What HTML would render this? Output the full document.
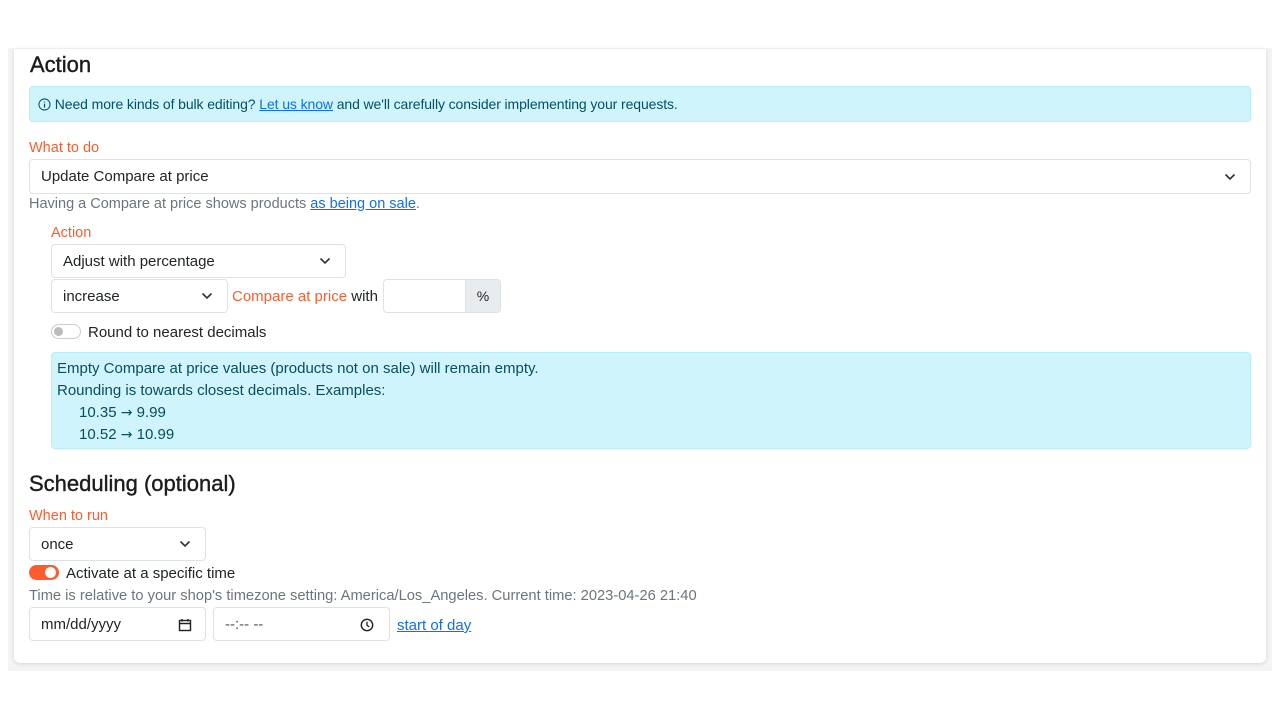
<!DOCTYPE html>
<html><head><style>
*{box-sizing:border-box;margin:0;padding:0}
body{width:1280px;height:720px;background:#fff;font-family:"Liberation Sans",sans-serif;position:relative;overflow:hidden;color:#212529}
.bg{position:absolute;left:8px;top:48px;width:1264px;height:623px;background:#f4f4f5}
.card{position:absolute;left:14px;top:49px;width:1252px;height:614px;background:#fff;border-radius:0 0 6px 6px;box-shadow:0 1px 4px rgba(0,0,0,.12)}
.a{position:absolute}
h2{position:absolute;font-weight:400;font-size:22px;color:#1d1d1d;-webkit-text-stroke:0.4px #1d1d1d}
.lbl{position:absolute;color:#fd5d2c;font-size:14.5px}
.info{position:absolute;background:#cff4fc;border:1px solid #b6effb;border-radius:4px;color:#055160;font-size:14.5px}
.sel{position:absolute;border:1px solid #dee2e6;border-radius:4px;background:#fff;font-size:15px;padding-left:11px;display:flex;align-items:center}
.chev{position:absolute;right:14px;top:50%;margin-top:-4px}
a{color:#0d6efd;text-decoration:underline}
.muted{position:absolute;color:#6c757d;font-size:14.5px}
.t{position:absolute;font-size:15px}
.ar{font-family:"DejaVu Sans",sans-serif;font-size:14px}
</style></head><body>
<div class="bg"></div>
<div class="card"></div>
<h2 style="left:30px;top:52px">Action</h2>
<div class="info" style="left:29px;top:86px;width:1222px;height:36px;padding:9px 0 0 8px;font-size:14px;letter-spacing:-0.1px"><svg width="13" height="13" viewBox="0 0 14 14" style="vertical-align:-2px"><circle cx="7" cy="7" r="6" fill="none" stroke="#055160" stroke-width="1.1"/><path d="M7 6v4.2M7 3.8v.9" stroke="#055160" stroke-width="1.3"/></svg> Need more kinds of bulk editing? <a>Let us know</a> and we'll carefully consider implementing your requests.</div>
<div class="lbl" style="left:29px;top:140px">What to do</div>
<div class="sel" style="left:29px;top:159px;width:1222px;height:35px">Update Compare at price<svg class="chev" width="12" height="8" viewBox="0 0 12 8"><path d="M1.5 1.5l4.5 4.5 4.5-4.5" fill="none" stroke="#333" stroke-width="1.6"/></svg></div>
<div class="muted" style="left:29px;top:196px">Having a Compare at price shows products <a>as being on sale</a>.</div>
<div class="lbl" style="left:51px;top:225px">Action</div>
<div class="sel" style="left:51px;top:244px;width:295px;height:34px">Adjust with percentage<svg class="chev" width="12" height="8" viewBox="0 0 12 8"><path d="M1.5 1.5l4.5 4.5 4.5-4.5" fill="none" stroke="#333" stroke-width="1.6"/></svg></div>
<div class="sel" style="left:51px;top:279px;width:177px;height:34px">increase<svg class="chev" width="12" height="8" viewBox="0 0 12 8"><path d="M1.5 1.5l4.5 4.5 4.5-4.5" fill="none" stroke="#333" stroke-width="1.6"/></svg></div>
<div class="t" style="left:232px;top:288px"><span style="color:#fd5d2c">Compare at price</span> with</div>
<div class="a" style="left:383px;top:279px;width:118px;height:34px;border:1px solid #dee2e6;border-radius:4px;overflow:hidden"><div style="position:absolute;right:0;top:0;width:35px;height:100%;background:#e9ecef;border-left:1px solid #dee2e6;text-align:center;line-height:32px;font-size:14px">%</div></div>
<div class="a" style="left:51px;top:324px;width:30px;height:15px;border:1px solid #ccc;border-radius:8px"><div style="position:absolute;left:2px;top:2px;width:9px;height:9px;border-radius:50%;background:#bbb"></div></div>
<div class="t" style="left:88px;top:324px">Round to nearest decimals</div>
<div class="info" style="left:51px;top:352px;width:1200px;height:97px;padding:5px 0 0 5px;font-size:15px;line-height:22px;color:#0b4d5c">Empty Compare at price values (products not on sale) will remain empty.<br>Rounding is towards closest decimals. Examples:<br><span style="padding-left:22px">10.35 <span class="ar">→</span> 9.99</span><br><span style="padding-left:22px">10.52 <span class="ar">→</span> 10.99</span></div>
<h2 style="left:29px;top:471px">Scheduling (optional)</h2>
<div class="lbl" style="left:29px;top:508px">When to run</div>
<div class="sel" style="left:29px;top:527px;width:177px;height:34px">once<svg class="chev" width="12" height="8" viewBox="0 0 12 8"><path d="M1.5 1.5l4.5 4.5 4.5-4.5" fill="none" stroke="#333" stroke-width="1.6"/></svg></div>
<div class="a" style="left:29px;top:565px;width:30px;height:15px;background:#fd5d2c;border-radius:8px"><div style="position:absolute;right:3px;top:2px;width:11px;height:11px;border-radius:50%;background:#fff"></div></div>
<div class="t" style="left:66px;top:565px">Activate at a specific time</div>
<div class="muted" style="left:29px;top:588px;font-size:14.7px">Time is relative to your shop's timezone setting: America/Los_Angeles. Current time: 2023-04-26 21:40</div>
<div class="sel" style="left:29px;top:607px;width:177px;height:34px">mm/dd/yyyy<svg class="a" style="right:13px;top:10px" width="14" height="14" viewBox="0 0 14 14"><rect x="1.5" y="2.5" width="11" height="10" fill="none" stroke="#222" stroke-width="1.4"/><path d="M1.5 5.5h11M4 1v2.5M10 1v2.5" stroke="#222" stroke-width="1.4"/></svg></div>
<div class="sel" style="left:213px;top:607px;width:177px;height:34px;color:#555">--:-- --<svg class="a" style="right:15px;top:10px" width="14" height="14" viewBox="0 0 14 14"><circle cx="7" cy="7" r="5.7" fill="none" stroke="#222" stroke-width="1.4"/><path d="M7 3.8V7.3l2.2 1.6" fill="none" stroke="#222" stroke-width="1.3"/></svg></div>
<div class="t" style="left:397px;top:617px"><a>start of day</a></div>
</body></html>
